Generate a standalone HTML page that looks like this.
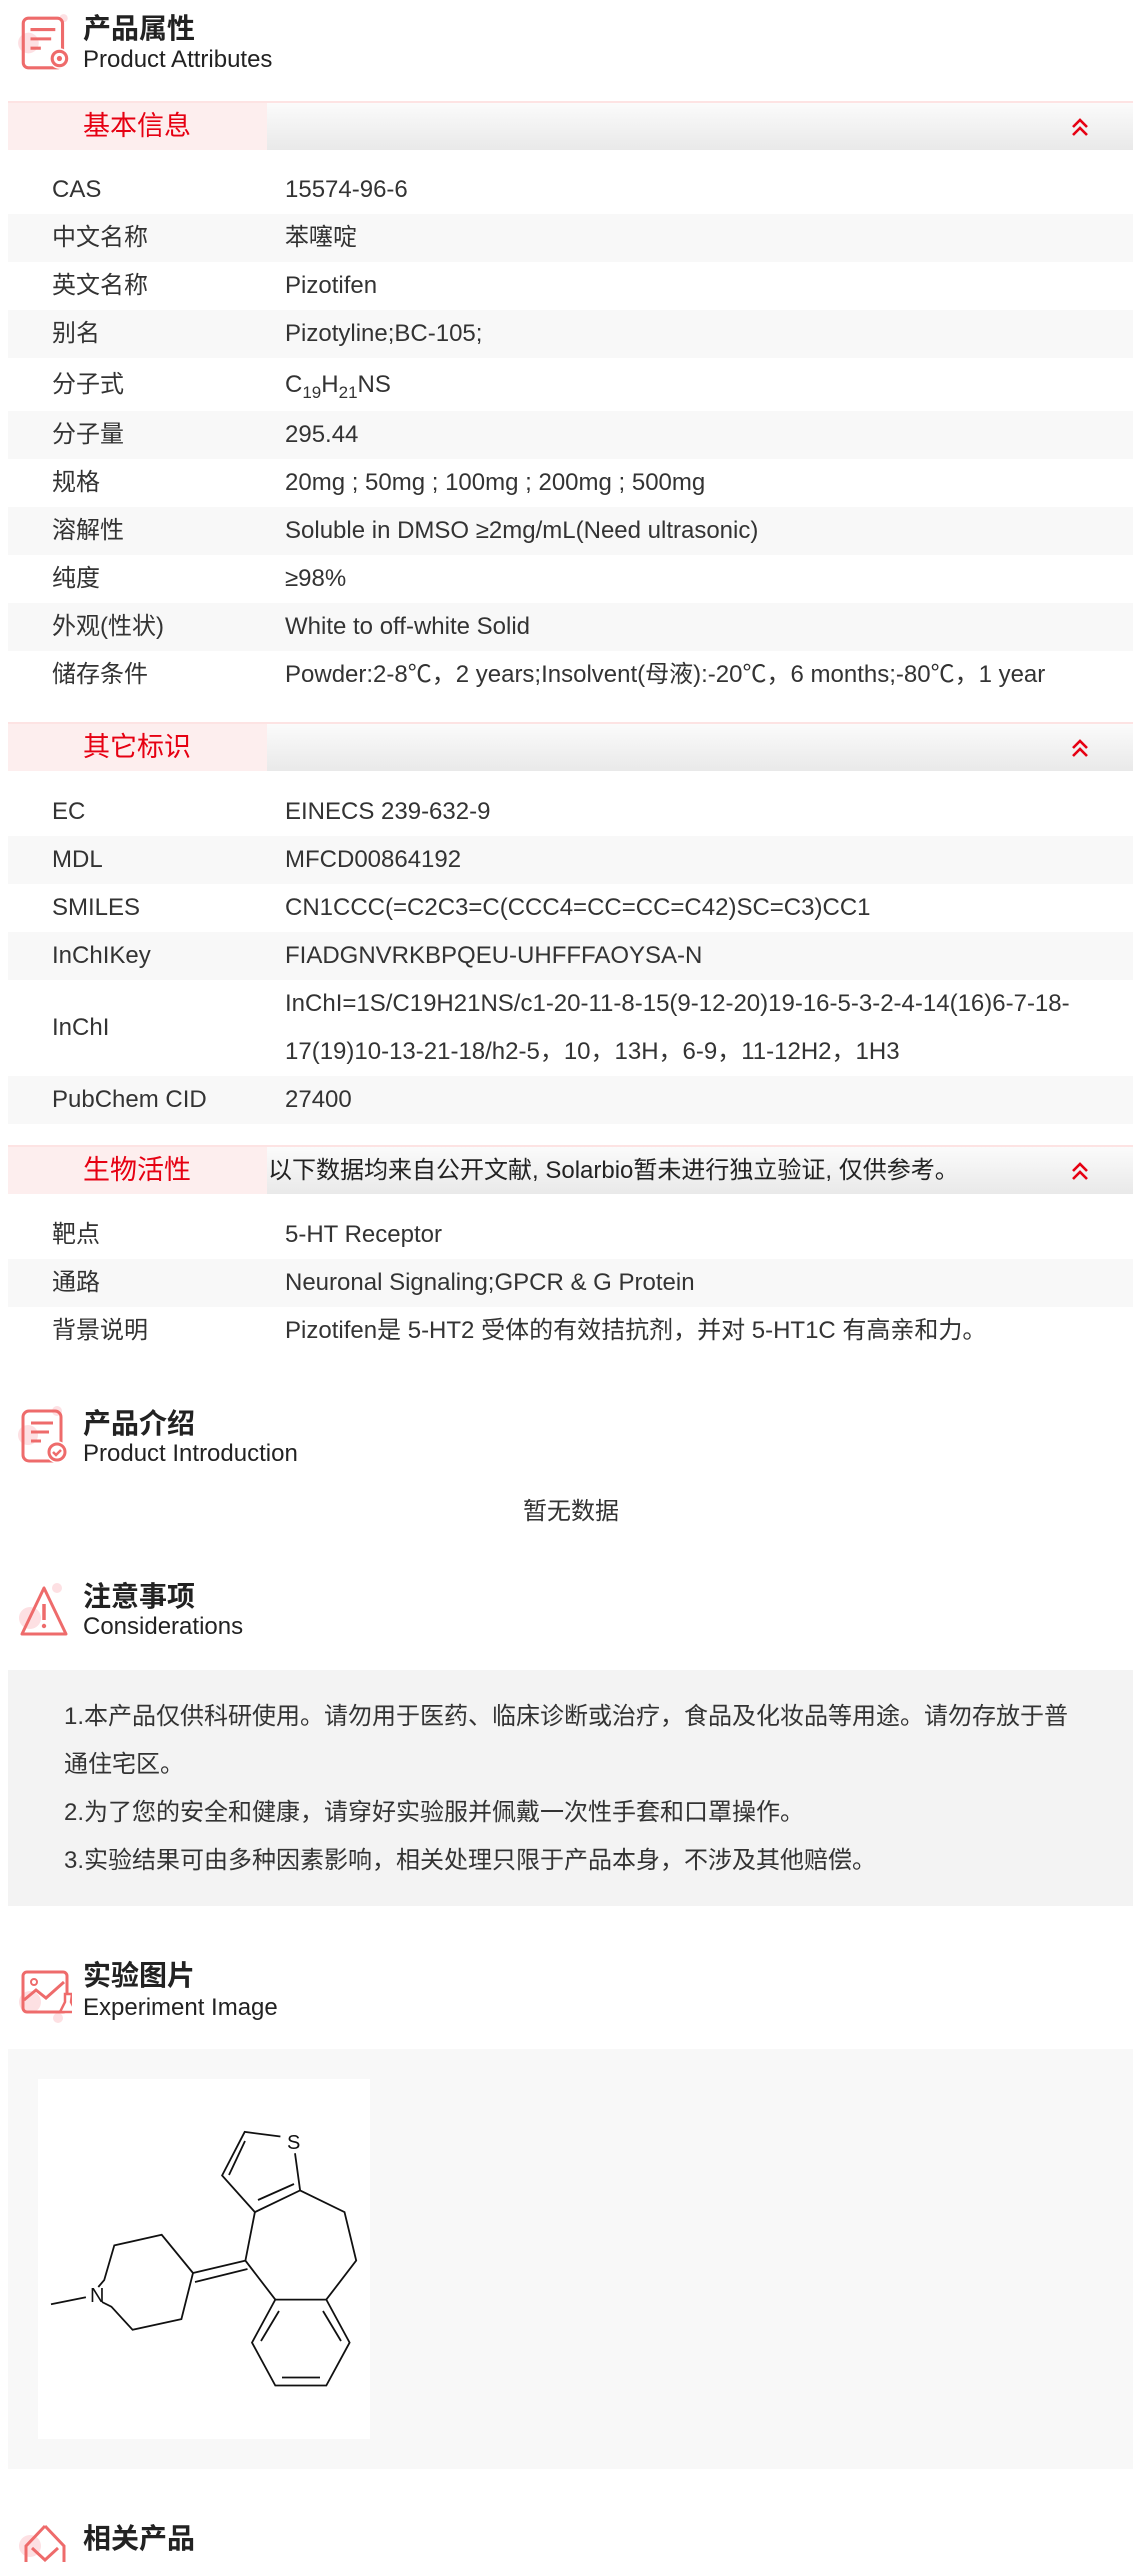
<!DOCTYPE html>
<html><head><meta charset="utf-8">
<style>
*{margin:0;padding:0;box-sizing:border-box}
body{width:1142px;height:2556px;position:relative;background:#fff;font-family:"Liberation Sans","Noto Sans CJK SC",sans-serif;color:#333;overflow:hidden}
.a{position:absolute}
.t{position:absolute;left:83px;font-size:28px;font-weight:bold;color:#222;line-height:34px;white-space:nowrap}
.s{position:absolute;left:83px;font-size:24px;color:#222;line-height:28px;white-space:nowrap}
.bar{position:absolute;left:8px;width:1125px;height:49px;border-top:2px solid #fde3e3;background:linear-gradient(#fbfbfb,#e9e9e9)}
.bar .p{position:absolute;left:0;top:0;width:259px;height:47px;background:#fdeeee;color:#e60012;font-size:27px;line-height:47px;padding-left:75px}
.bar .n{position:absolute;left:260px;top:0;line-height:47px;font-size:24px;color:#222;white-space:nowrap}
.bar svg{position:absolute;left:1062px;top:14px}
.r{position:absolute;left:8px;width:1125px;height:48px;font-size:24px;line-height:48px;white-space:nowrap}
.r.g{background:#f8f8f8}
.r .l{position:absolute;left:44px}
.r .v{position:absolute;left:277px}
.ic{position:absolute;left:18px}
</style></head><body>

<svg class="ic" style="top:12px" width="56" height="62" viewBox="0 0 54 60"><circle cx="10" cy="30" r="10" fill="#fde0e3"/><circle cx="44" cy="6" r="4" fill="#fde0e3"/><rect x="5" y="6" width="38" height="48" rx="5" fill="none" stroke="#ee6b6b" stroke-width="3"/><path d="M12 17h24M12 26h20M12 35h10" stroke="#ee6b6b" stroke-width="3"/><circle cx="40" cy="45" r="10" fill="#fff"/><circle cx="40" cy="45" r="7" fill="none" stroke="#ee6b6b" stroke-width="3"/><circle cx="40" cy="45" r="2.5" fill="#ee6b6b"/></svg>
<div class="t" style="top:12px">产品属性</div>
<div class="s" style="top:46px">Product Attributes</div>

<div class="bar" style="top:101px"><div class="p">基本信息</div><svg width="20" height="20" viewBox="0 0 20 20"><path d="M3 10l7-7 7 7M3 18l7-7 7 7" fill="none" stroke="#e60012" stroke-width="2.6"/></svg></div>
<div class="r" style="top:166px"><span class="l">CAS</span><span class="v">15574-96-6</span></div>
<div class="r g" style="top:214px"><span class="l">中文名称</span><span class="v">苯噻啶</span></div>
<div class="r" style="top:262px"><span class="l">英文名称</span><span class="v">Pizotifen</span></div>
<div class="r g" style="top:310px"><span class="l">别名</span><span class="v">Pizotyline;BC-105;</span></div>
<div class="r" style="top:358px;height:53px;line-height:53px"><span class="l">分子式</span><span class="v">C<sub style="font-size:17px">19</sub>H<sub style="font-size:17px">21</sub>NS</span></div>
<div class="r g" style="top:411px"><span class="l">分子量</span><span class="v">295.44</span></div>
<div class="r" style="top:459px"><span class="l">规格</span><span class="v">20mg ; 50mg ; 100mg ; 200mg ; 500mg</span></div>
<div class="r g" style="top:507px"><span class="l">溶解性</span><span class="v">Soluble in DMSO ≥2mg/mL(Need ultrasonic)</span></div>
<div class="r" style="top:555px"><span class="l">纯度</span><span class="v">≥98%</span></div>
<div class="r g" style="top:603px"><span class="l">外观(性状)</span><span class="v">White to off-white Solid</span></div>
<div class="r" style="top:651px"><span class="l">储存条件</span><span class="v">Powder:2-8℃，2 years;Insolvent(母液):-20℃，6 months;-80℃，1 year</span></div>

<div class="bar" style="top:722px"><div class="p">其它标识</div><svg width="20" height="20" viewBox="0 0 20 20"><path d="M3 10l7-7 7 7M3 18l7-7 7 7" fill="none" stroke="#e60012" stroke-width="2.6"/></svg></div>
<div class="r" style="top:788px"><span class="l">EC</span><span class="v">EINECS 239-632-9</span></div>
<div class="r g" style="top:836px"><span class="l">MDL</span><span class="v">MFCD00864192</span></div>
<div class="r" style="top:884px"><span class="l">SMILES</span><span class="v">CN1CCC(=C2C3=C(CCC4=CC=CC=C42)SC=C3)CC1</span></div>
<div class="r g" style="top:932px"><span class="l">InChIKey</span><span class="v">FIADGNVRKBPQEU-UHFFFAOYSA-N</span></div>
<div class="r" style="top:980px;height:96px;line-height:96px"><span class="l">InChI</span><span class="v" style="line-height:48px">InChI=1S/C19H21NS/c1-20-11-8-15(9-12-20)19-16-5-3-2-4-14(16)6-7-18-<br>17(19)10-13-21-18/h2-5，10，13H，6-9，11-12H2，1H3</span></div>
<div class="r g" style="top:1076px"><span class="l">PubChem CID</span><span class="v">27400</span></div>

<div class="bar" style="top:1145px"><div class="p">生物活性</div><div class="n">以下数据均来自公开文献, Solarbio暂未进行独立验证, 仅供参考。</div><svg width="20" height="20" viewBox="0 0 20 20"><path d="M3 10l7-7 7 7M3 18l7-7 7 7" fill="none" stroke="#e60012" stroke-width="2.6"/></svg></div>
<div class="r" style="top:1211px"><span class="l">靶点</span><span class="v">5-HT Receptor</span></div>
<div class="r g" style="top:1259px"><span class="l">通路</span><span class="v">Neuronal Signaling;GPCR &amp; G Protein</span></div>
<div class="r" style="top:1307px"><span class="l">背景说明</span><span class="v">Pizotifen是 5-HT2 受体的有效拮抗剂，并对 5-HT1C 有高亲和力。</span></div>

<svg class="ic" style="top:1403px" width="54" height="62" viewBox="0 0 54 62"><circle cx="10" cy="32" r="10" fill="#fde0e3"/><circle cx="39" cy="8" r="5" fill="#fde0e3"/><rect x="5" y="8" width="38" height="50" rx="6" fill="none" stroke="#ee6b6b" stroke-width="3"/><path d="M13 20h22M13 29h18M13 38h10" stroke="#ee6b6b" stroke-width="3"/><circle cx="39" cy="49" r="11" fill="#fff"/><circle cx="39" cy="49" r="8" fill="none" stroke="#ee6b6b" stroke-width="3"/><path d="M35 49l3 3 5-5" fill="none" stroke="#ee6b6b" stroke-width="2.5"/></svg>
<div class="t" style="top:1407px">产品介绍</div>
<div class="s" style="top:1440px">Product Introduction</div>
<div class="a" style="top:1497px;left:0;width:1142px;text-align:center;font-size:24px;line-height:30px">暂无数据</div>

<svg class="ic" style="top:1578px" width="54" height="62" viewBox="0 0 54 62"><circle cx="12" cy="40" r="11" fill="#fde0e3"/><circle cx="39" cy="10" r="5" fill="#fde0e3"/><path d="M26 10L4 56h44z" fill="none" stroke="#ee6b6b" stroke-width="3" stroke-linejoin="round"/><path d="M26 26v16" stroke="#ee6b6b" stroke-width="3.5"/><circle cx="26" cy="48" r="2.2" fill="#ee6b6b"/></svg>
<div class="t" style="top:1580px">注意事项</div>
<div class="s" style="top:1613px">Considerations</div>
<div class="a" style="left:8px;top:1670px;width:1125px;height:236px;background:#f3f3f3;font-size:24px;line-height:48px;padding:23px 0 0 56px;white-space:nowrap">1.本产品仅供科研使用。请勿用于医药、临床诊断或治疗，食品及化妆品等用途。请勿存放于普<br>通住宅区。<br>2.为了您的安全和健康，请穿好实验服并佩戴一次性手套和口罩操作。<br>3.实验结果可由多种因素影响，相关处理只限于产品本身，不涉及其他赔偿。</div>

<svg class="ic" style="top:1962px" width="54" height="62" viewBox="0 0 54 62"><circle cx="12" cy="40" r="11" fill="#fde0e3"/><circle cx="40" cy="56" r="5" fill="#fde0e3"/><rect x="5" y="10" width="44" height="40" rx="4" fill="none" stroke="#ee6b6b" stroke-width="3"/><path d="M6 38l12-10 10 8 18-16" fill="none" stroke="#ee6b6b" stroke-width="3"/><circle cx="16" cy="20" r="3" fill="none" stroke="#ee6b6b" stroke-width="2"/><path d="M54 32h-7v8l-5 10h16l-5-10z" fill="#fff" stroke="#ee6b6b" stroke-width="2.5"/></svg>
<div class="t" style="top:1959px">实验图片</div>
<div class="s" style="top:1994px">Experiment Image</div>
<div class="a" style="left:8px;top:2049px;width:1125px;height:420px;background:#f8f8f8"></div>
<svg class="a" style="left:38px;top:2079px" width="332" height="360" viewBox="0 0 332 360">
<rect width="332" height="360" fill="#fff"/>
<g stroke="#111" stroke-width="1.8" fill="none">
<path d="M242.4 57.5L206.7 52.9L184.1 96.5L216.9 133.1L262.1 111.4L257 74.2"/>
<path d="M207 62L191 96M220 121L256 105"/>
<path d="M262.1 111.4L306.5 133.1L318.2 181.6L288.3 220.6"/>
<path d="M216.9 133.1L207.4 181.6L237.3 220.6"/>
<path d="M207.4 181.6L155 194M209.5 190L157 203"/>
<path d="M155 194L123.7 155.8L76.3 166.4L66.2 201.1L60.3 208"/>
<path d="M64 223L73.4 227.7L94.6 250.8L143.4 240.1L155 194"/>
<path d="M13 225.3L47.9 218.2"/>
<path d="M237.3 220.6L288.3 220.6L311.6 263.6L288.3 306.5L237.3 306.5L214 263.6Z"/>
<path d="M241 232L223 262M285 232L303 262M244 298.5L282 298.5"/>
</g>
<text x="249" y="70" font-size="20" font-family="Liberation Sans,sans-serif" fill="#111">S</text>
<text x="52" y="223" font-size="20" font-family="Liberation Sans,sans-serif" fill="#111">N</text>
</svg>

<svg class="ic" style="top:2512px" width="54" height="50" viewBox="0 0 54 50"><circle cx="12" cy="34" r="11" fill="#fde0e3"/><path d="M27 14L8 34v16M27 14l19 20v16M14 36l13 12 13-12" fill="none" stroke="#ee6b6b" stroke-width="3"/></svg>
<div class="t" style="top:2522px">相关产品</div>
</body></html>
